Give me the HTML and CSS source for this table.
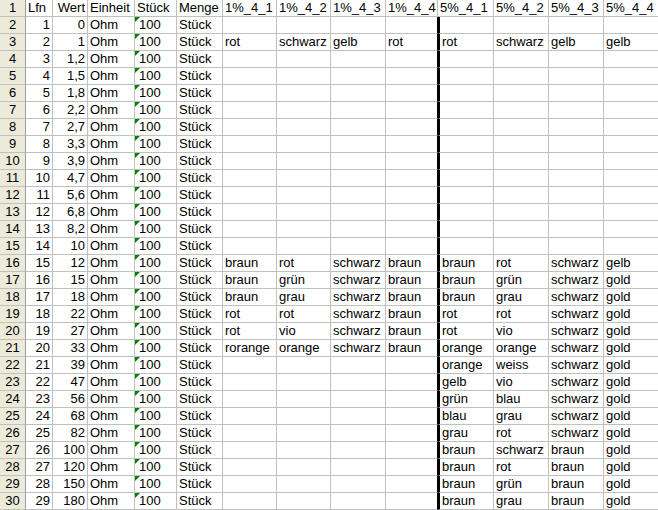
FILE: index.html
```html
<!DOCTYPE html>
<html lang="de">
<head>
<meta charset="utf-8">
<title>Widerstände</title>
<link rel="stylesheet" href="styles.css">
</head>
<body>
<div class="sheet">
  <div class="row"><div class="c h">1</div><div class="c">Lfn</div><div class="c n">Wert</div><div class="c">Einheit</div><div class="c">Stück</div><div class="c">Menge</div><div class="c">1%_4_1</div><div class="c">1%_4_2</div><div class="c">1%_4_3</div><div class="c">1%_4_4</div><div class="c">5%_4_1</div><div class="c">5%_4_2</div><div class="c">5%_4_3</div><div class="c">5%_4_4</div></div>
  <div class="row"><div class="c h">2</div><div class="c n">1</div><div class="c n">0</div><div class="c">Ohm</div><div class="c tri">100</div><div class="c">Stück</div><div class="c"></div><div class="c"></div><div class="c"></div><div class="c b"></div><div class="c s"></div><div class="c"></div><div class="c"></div><div class="c"></div></div>
  <div class="row"><div class="c h">3</div><div class="c n">2</div><div class="c n">1</div><div class="c">Ohm</div><div class="c tri">100</div><div class="c">Stück</div><div class="c">rot</div><div class="c">schwarz</div><div class="c">gelb</div><div class="c b">rot</div><div class="c s">rot</div><div class="c">schwarz</div><div class="c">gelb</div><div class="c">gelb</div></div>
  <div class="row"><div class="c h">4</div><div class="c n">3</div><div class="c n">1,2</div><div class="c">Ohm</div><div class="c tri">100</div><div class="c">Stück</div><div class="c"></div><div class="c"></div><div class="c"></div><div class="c b"></div><div class="c s"></div><div class="c"></div><div class="c"></div><div class="c"></div></div>
  <div class="row"><div class="c h">5</div><div class="c n">4</div><div class="c n">1,5</div><div class="c">Ohm</div><div class="c tri">100</div><div class="c">Stück</div><div class="c"></div><div class="c"></div><div class="c"></div><div class="c b"></div><div class="c s"></div><div class="c"></div><div class="c"></div><div class="c"></div></div>
  <div class="row"><div class="c h">6</div><div class="c n">5</div><div class="c n">1,8</div><div class="c">Ohm</div><div class="c tri">100</div><div class="c">Stück</div><div class="c"></div><div class="c"></div><div class="c"></div><div class="c b"></div><div class="c s"></div><div class="c"></div><div class="c"></div><div class="c"></div></div>
  <div class="row"><div class="c h">7</div><div class="c n">6</div><div class="c n">2,2</div><div class="c">Ohm</div><div class="c tri">100</div><div class="c">Stück</div><div class="c"></div><div class="c"></div><div class="c"></div><div class="c b"></div><div class="c s"></div><div class="c"></div><div class="c"></div><div class="c"></div></div>
  <div class="row"><div class="c h">8</div><div class="c n">7</div><div class="c n">2,7</div><div class="c">Ohm</div><div class="c tri">100</div><div class="c">Stück</div><div class="c"></div><div class="c"></div><div class="c"></div><div class="c b"></div><div class="c s"></div><div class="c"></div><div class="c"></div><div class="c"></div></div>
  <div class="row"><div class="c h">9</div><div class="c n">8</div><div class="c n">3,3</div><div class="c">Ohm</div><div class="c tri">100</div><div class="c">Stück</div><div class="c"></div><div class="c"></div><div class="c"></div><div class="c b"></div><div class="c s"></div><div class="c"></div><div class="c"></div><div class="c"></div></div>
  <div class="row"><div class="c h">10</div><div class="c n">9</div><div class="c n">3,9</div><div class="c">Ohm</div><div class="c tri">100</div><div class="c">Stück</div><div class="c"></div><div class="c"></div><div class="c"></div><div class="c b"></div><div class="c s"></div><div class="c"></div><div class="c"></div><div class="c"></div></div>
  <div class="row"><div class="c h">11</div><div class="c n">10</div><div class="c n">4,7</div><div class="c">Ohm</div><div class="c tri">100</div><div class="c">Stück</div><div class="c"></div><div class="c"></div><div class="c"></div><div class="c b"></div><div class="c s"></div><div class="c"></div><div class="c"></div><div class="c"></div></div>
  <div class="row"><div class="c h">12</div><div class="c n">11</div><div class="c n">5,6</div><div class="c">Ohm</div><div class="c tri">100</div><div class="c">Stück</div><div class="c"></div><div class="c"></div><div class="c"></div><div class="c b"></div><div class="c s"></div><div class="c"></div><div class="c"></div><div class="c"></div></div>
  <div class="row"><div class="c h">13</div><div class="c n">12</div><div class="c n">6,8</div><div class="c">Ohm</div><div class="c tri">100</div><div class="c">Stück</div><div class="c"></div><div class="c"></div><div class="c"></div><div class="c b"></div><div class="c s"></div><div class="c"></div><div class="c"></div><div class="c"></div></div>
  <div class="row"><div class="c h">14</div><div class="c n">13</div><div class="c n">8,2</div><div class="c">Ohm</div><div class="c tri">100</div><div class="c">Stück</div><div class="c"></div><div class="c"></div><div class="c"></div><div class="c b"></div><div class="c s"></div><div class="c"></div><div class="c"></div><div class="c"></div></div>
  <div class="row"><div class="c h">15</div><div class="c n">14</div><div class="c n">10</div><div class="c">Ohm</div><div class="c tri">100</div><div class="c">Stück</div><div class="c"></div><div class="c"></div><div class="c"></div><div class="c b"></div><div class="c s"></div><div class="c"></div><div class="c"></div><div class="c"></div></div>
  <div class="row"><div class="c h">16</div><div class="c n">15</div><div class="c n">12</div><div class="c">Ohm</div><div class="c tri">100</div><div class="c">Stück</div><div class="c">braun</div><div class="c">rot</div><div class="c">schwarz</div><div class="c b">braun</div><div class="c s">braun</div><div class="c">rot</div><div class="c">schwarz</div><div class="c">gelb</div></div>
  <div class="row"><div class="c h">17</div><div class="c n">16</div><div class="c n">15</div><div class="c">Ohm</div><div class="c tri">100</div><div class="c">Stück</div><div class="c">braun</div><div class="c">grün</div><div class="c">schwarz</div><div class="c b">braun</div><div class="c s">braun</div><div class="c">grün</div><div class="c">schwarz</div><div class="c">gold</div></div>
  <div class="row"><div class="c h">18</div><div class="c n">17</div><div class="c n">18</div><div class="c">Ohm</div><div class="c tri">100</div><div class="c">Stück</div><div class="c">braun</div><div class="c">grau</div><div class="c">schwarz</div><div class="c b">braun</div><div class="c s">braun</div><div class="c">grau</div><div class="c">schwarz</div><div class="c">gold</div></div>
  <div class="row"><div class="c h">19</div><div class="c n">18</div><div class="c n">22</div><div class="c">Ohm</div><div class="c tri">100</div><div class="c">Stück</div><div class="c">rot</div><div class="c">rot</div><div class="c">schwarz</div><div class="c b">braun</div><div class="c s">rot</div><div class="c">rot</div><div class="c">schwarz</div><div class="c">gold</div></div>
  <div class="row"><div class="c h">20</div><div class="c n">19</div><div class="c n">27</div><div class="c">Ohm</div><div class="c tri">100</div><div class="c">Stück</div><div class="c">rot</div><div class="c">vio</div><div class="c">schwarz</div><div class="c b">braun</div><div class="c s">rot</div><div class="c">vio</div><div class="c">schwarz</div><div class="c">gold</div></div>
  <div class="row"><div class="c h">21</div><div class="c n">20</div><div class="c n">33</div><div class="c">Ohm</div><div class="c tri">100</div><div class="c">Stück</div><div class="c">rorange</div><div class="c">orange</div><div class="c">schwarz</div><div class="c b">braun</div><div class="c s">orange</div><div class="c">orange</div><div class="c">schwarz</div><div class="c">gold</div></div>
  <div class="row"><div class="c h">22</div><div class="c n">21</div><div class="c n">39</div><div class="c">Ohm</div><div class="c tri">100</div><div class="c">Stück</div><div class="c"></div><div class="c"></div><div class="c"></div><div class="c b"></div><div class="c s">orange</div><div class="c">weiss</div><div class="c">schwarz</div><div class="c">gold</div></div>
  <div class="row"><div class="c h">23</div><div class="c n">22</div><div class="c n">47</div><div class="c">Ohm</div><div class="c tri">100</div><div class="c">Stück</div><div class="c"></div><div class="c"></div><div class="c"></div><div class="c b"></div><div class="c s">gelb</div><div class="c">vio</div><div class="c">schwarz</div><div class="c">gold</div></div>
  <div class="row"><div class="c h">24</div><div class="c n">23</div><div class="c n">56</div><div class="c">Ohm</div><div class="c tri">100</div><div class="c">Stück</div><div class="c"></div><div class="c"></div><div class="c"></div><div class="c b"></div><div class="c s">grün</div><div class="c">blau</div><div class="c">schwarz</div><div class="c">gold</div></div>
  <div class="row"><div class="c h">25</div><div class="c n">24</div><div class="c n">68</div><div class="c">Ohm</div><div class="c tri">100</div><div class="c">Stück</div><div class="c"></div><div class="c"></div><div class="c"></div><div class="c b"></div><div class="c s">blau</div><div class="c">grau</div><div class="c">schwarz</div><div class="c">gold</div></div>
  <div class="row"><div class="c h">26</div><div class="c n">25</div><div class="c n">82</div><div class="c">Ohm</div><div class="c tri">100</div><div class="c">Stück</div><div class="c"></div><div class="c"></div><div class="c"></div><div class="c b"></div><div class="c s">grau</div><div class="c">rot</div><div class="c">schwarz</div><div class="c">gold</div></div>
  <div class="row"><div class="c h">27</div><div class="c n">26</div><div class="c n">100</div><div class="c">Ohm</div><div class="c tri">100</div><div class="c">Stück</div><div class="c"></div><div class="c"></div><div class="c"></div><div class="c b"></div><div class="c s">braun</div><div class="c">schwarz</div><div class="c">braun</div><div class="c">gold</div></div>
  <div class="row"><div class="c h">28</div><div class="c n">27</div><div class="c n">120</div><div class="c">Ohm</div><div class="c tri">100</div><div class="c">Stück</div><div class="c"></div><div class="c"></div><div class="c"></div><div class="c b"></div><div class="c s">braun</div><div class="c">rot</div><div class="c">braun</div><div class="c">gold</div></div>
  <div class="row"><div class="c h">29</div><div class="c n">28</div><div class="c n">150</div><div class="c">Ohm</div><div class="c tri">100</div><div class="c">Stück</div><div class="c"></div><div class="c"></div><div class="c"></div><div class="c b"></div><div class="c s">braun</div><div class="c">grün</div><div class="c">braun</div><div class="c">gold</div></div>
  <div class="row"><div class="c h">30</div><div class="c n">29</div><div class="c n">180</div><div class="c">Ohm</div><div class="c tri">100</div><div class="c">Stück</div><div class="c"></div><div class="c"></div><div class="c"></div><div class="c b"></div><div class="c s">braun</div><div class="c">grau</div><div class="c">braun</div><div class="c">gold</div></div>
</div>
</body>
</html>
```

FILE: styles.css
```css
html, body {
  margin: 0;
  padding: 0;
  background: #ffffff;
  overflow: hidden;
}

.sheet {
  display: flex;
  flex-direction: column;
  width: 659px;
  font-family: "Liberation Sans", Arial, sans-serif;
  font-size: 13px;
  color: #000000;
}

.row {
  display: grid;
  grid-template-columns: 26px 27px 35px 47px 42px 46px 54px 54px 55px 52px 56px 55px 55px 55px;
  height: 17px;
}

.c {
  position: relative;
  box-sizing: border-box;
  height: 17px;
  line-height: 16px;
  padding: 0 2px;
  border-right: 1px solid #c0c0c0;
  border-bottom: 1px solid #c0c0c0;
  white-space: nowrap;
  overflow: hidden;
}

.h {
  text-align: center;
  padding: 0;
  background: #ebeadb;
  border-right: 1px solid #9d9da1;
  border-bottom: 1px solid #c5c2b2;
}

.n {
  text-align: right;
}

.tri {
  padding-left: 4px;
}

.tri::before {
  content: "";
  position: absolute;
  left: 0;
  top: 0;
  width: 0;
  height: 0;
  border-top: 5px solid #008000;
  border-right: 5px solid transparent;
}

.b {
  border-right-color: #000000;
}

.s {
  border-left: 2px solid #000000;
}
```
